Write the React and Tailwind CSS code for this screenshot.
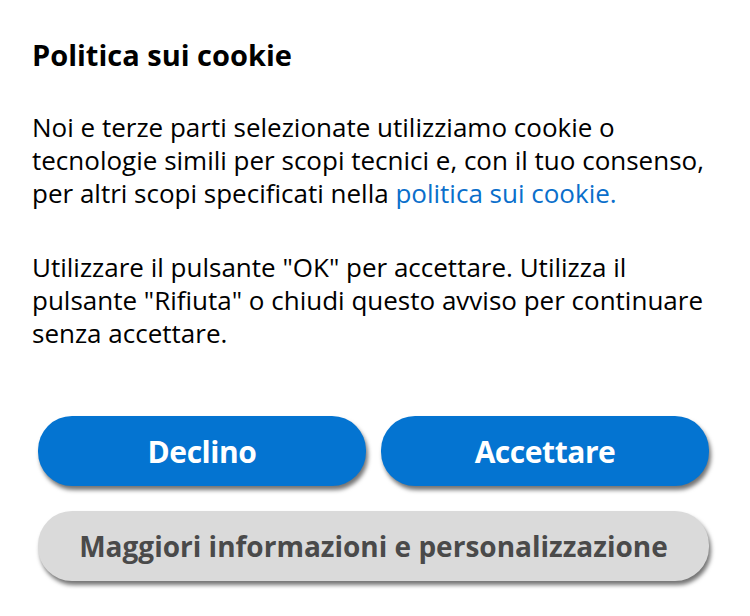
export default function App() {
  return (
    <div className="w-[750px] h-[616px] bg-white text-black font-['Open_Sans',sans-serif]">
      <div className="pl-[32px] pr-[20px] pt-[37px]">
        <h1 className="text-[29px] leading-[36px] font-bold">Politica sui cookie</h1>

        <p className="mt-[38px] text-[26px] leading-[33px] whitespace-nowrap">
          Noi e terze parti selezionate utilizziamo cookie o
          <br />
          tecnologie simili per scopi tecnici e, con il tuo consenso,
          <br />
          per altri scopi specificati nella{" "}
          <a href="#" className="text-[#0a6fcb]">politica sui cookie.</a>
        </p>

        <p className="mt-[41px] text-[26px] leading-[33px] whitespace-nowrap">
          Utilizzare il pulsante "OK" per accettare. Utilizza il
          <br />
          pulsante "Rifiuta" o chiudi questo avviso per continuare
          <br />
          senza accettare.
        </p>
      </div>

      <div className="pl-[38px] pr-[41px] mt-[66px] flex flex-col gap-[25px]">
        <div className="flex gap-[15px]">
          <button className="flex-1 h-[70px] rounded-[34px] bg-[#0474d1] text-white text-[30px] font-bold tracking-[-0.015em] shadow-[2px_4px_4px_rgba(0,0,0,0.55)]">
            Declino
          </button>
          <button className="flex-1 h-[70px] rounded-[34px] bg-[#0474d1] text-white text-[30px] font-bold tracking-[-0.015em] shadow-[2px_4px_4px_rgba(0,0,0,0.55)]">
            Accettare
          </button>
        </div>
        <button className="h-[70px] rounded-[34px] bg-[#dadada] text-[#4a4a4a] text-[28px] font-bold shadow-[2px_4px_4px_rgba(0,0,0,0.55)]">
          Maggiori informazioni e personalizzazione
        </button>
      </div>
    </div>
  );
}
